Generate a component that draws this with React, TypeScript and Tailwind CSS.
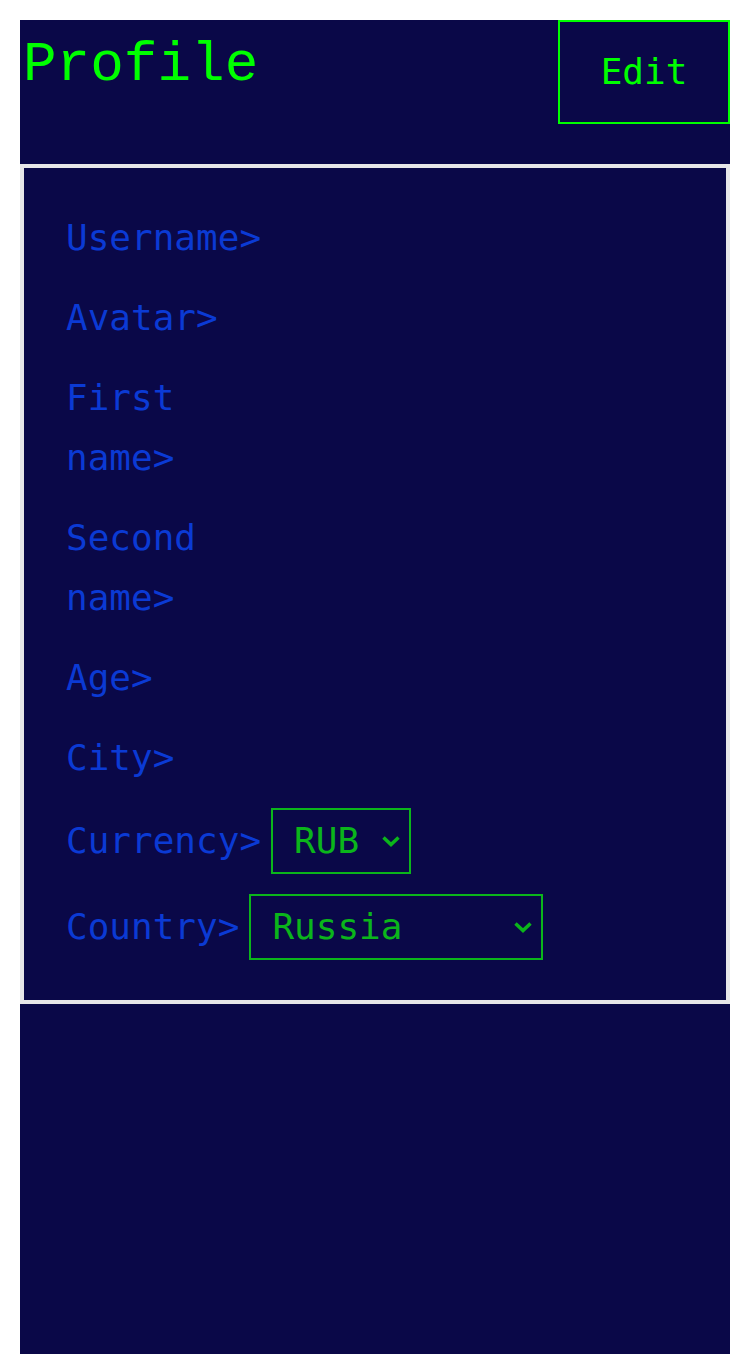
const fields = ["Username>", "Avatar>", "First name>", "Second name>", "Age>", "City>"]

const Select = ({ value, width }: { value: string; width: string }) => (
  <div
    className={`relative flex items-center h-[66px] border-2 border-[#0bb51b] text-[#0bb51b] pl-[21px] ${width}`}
  >
    <span>{value}</span>
    <svg
      viewBox="0 0 20 14"
      className="absolute right-[8px] top-1/2 -translate-y-1/2 w-[20px] h-[14px]"
      fill="none"
      stroke="currentColor"
      strokeWidth={3.5}
    >
      <path d="M2.5 3.5 L10 10.5 L17.5 3.5" />
    </svg>
  </div>
)

const App = () => {
  return (
    <div className="pt-[20px] pl-[20px] bg-white min-h-[1354px] overflow-hidden">
      <div className="w-[710px] h-[1334px] bg-[#0a0848] font-['DejaVu_Sans_Mono',monospace]">
        {/* шапка */}
        <header className="h-[144px] flex items-start justify-between">
          <h1 className="font-['Liberation_Mono',monospace] text-[56px] leading-[90px] text-[#00ff00] ml-[3px]">
            Profile
          </h1>
          <button className="w-[172px] h-[104px] border-2 border-[#00ff00] text-[#00ff00] text-[36px] leading-none">
            Edit
          </button>
        </header>

        <div className="border-4 border-[#e7e6e9] px-[42px] py-[40px] flex flex-col gap-5 text-[36px] text-[#0b3ad4] leading-[60px]">
          {fields.map((f) => (
            <div key={f} className="max-w-[215px]">
              {f}
            </div>
          ))}
          <div className="flex items-center gap-[10px]">
            <span>Currency&gt;</span>
            <Select value="RUB" width="w-[140px]" />
          </div>
          <div className="flex items-center gap-[10px]">
            <span>Country&gt;</span>
            <Select value="Russia" width="w-[294px]" />
          </div>
        </div>
      </div>
    </div>
  )
}

export default App
